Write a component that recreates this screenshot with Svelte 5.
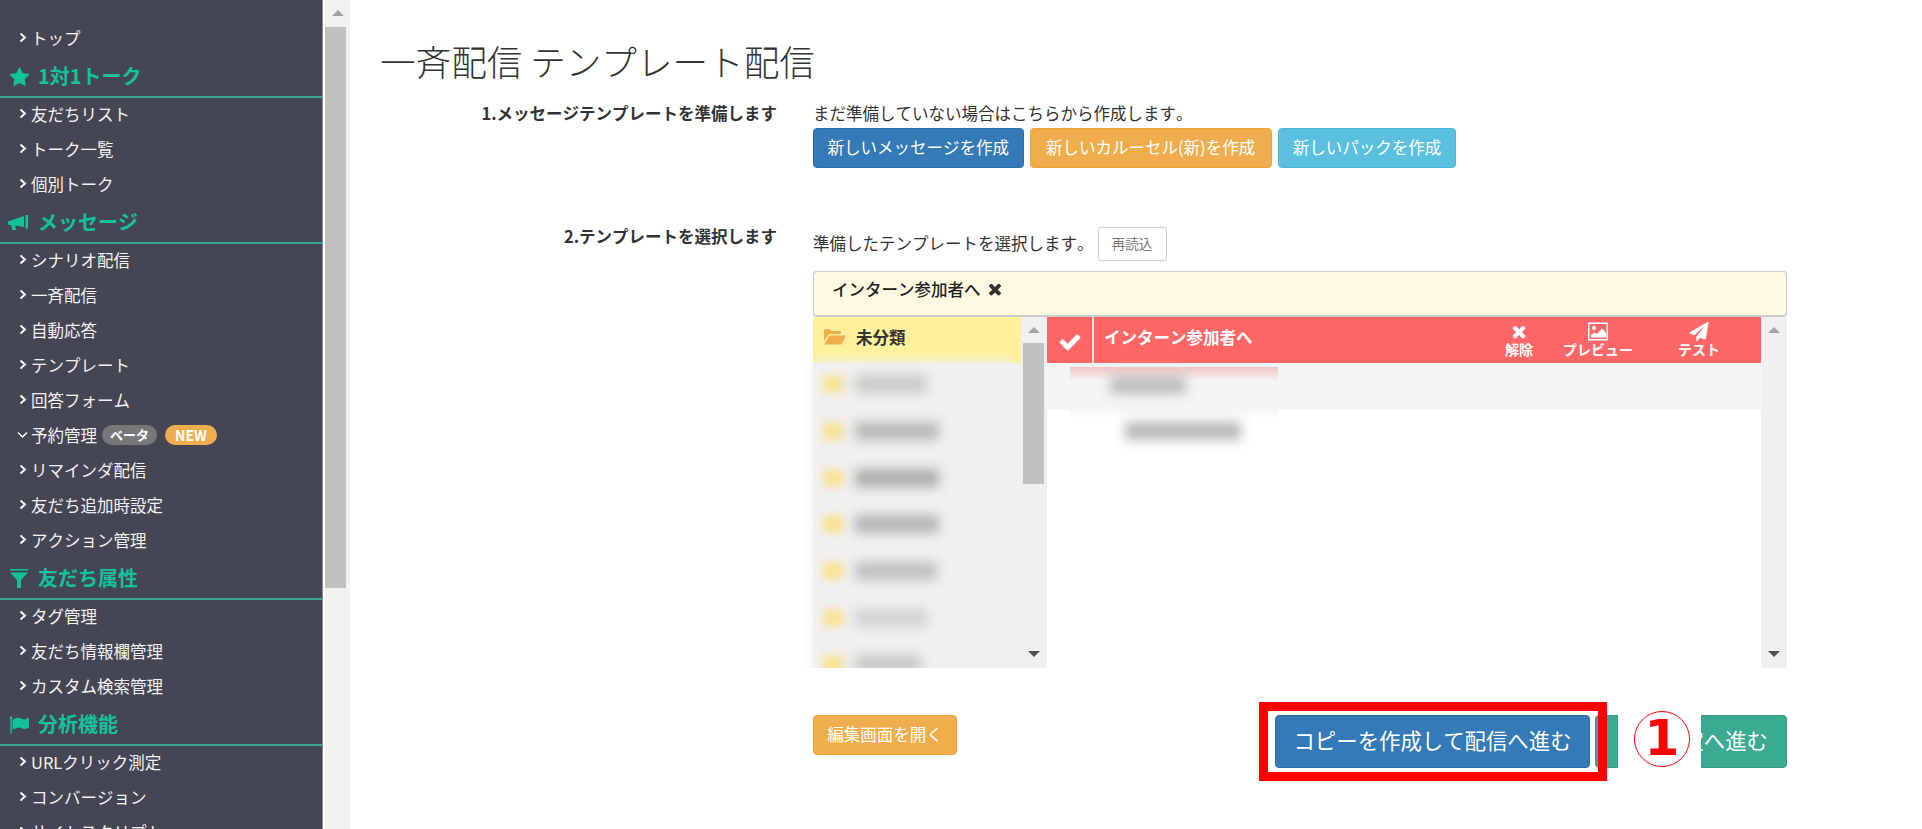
<script>
	const checkPath = 'M1671 566q0 40-28 68l-724 724-136 136q-28 28-68 28t-68-28l-136-136-362-362q-28-28-28-68t28-68l136-136q28-28 68-28t68 28l294 295 656-657q28-28 68-28t68 28l136 136q28 28 28 68z';
	const timesPath = 'M1490 1322q0 40-28 68l-136 136q-28 28-68 28t-68-28l-294-294-294 294q-28 28-68 28t-68-28l-136-136q-28-28-28-68t28-68l294-294-294-294q-28-28-28-68t28-68l136-136q28-28 68-28t68 28l294 294 294-294q28-28 68-28t68 28l136 136q28 28 28 68t-28 68l-294 294 294 294q28 28 28 68z';
	const starPath = 'M1728 647q0 22-26 48l-363 354 86 500q1 7 1 20 0 21-10.5 35.5t-30.5 14.5q-19 0-40-12l-449-236-449 236q-22 12-40 12-21 0-31.5-14.5t-10.5-35.5q0-6 2-20l86-500-364-354q-25-27-25-48 0-37 56-46l502-73 225-455q19-41 49-41t49 41l225 455 502 73q56 9 56 46z';
	const planePath = 'M1764 11q33 24 27 64l-256 1536q-5 29-32 45-14 8-31 8-11 0-24-5l-453-185-242 295q-18 23-49 23-13 0-22-4-19-7-30.5-23.5t-11.5-36.5v-349l864-1059-1069 925-395-162q-37-14-40-55-2-40 32-59l1664-960q15-9 32-9 20 0 36 11z';
	const flagPath = 'M320 256q0 72-64 110v1266q0 13-9.5 22.5t-22.5 9.5h-64q-13 0-22.5-9.5t-9.5-22.5v-1266q-64-38-64-110 0-53 37.5-90.5t90.5-37.5 90.5 37.5 37.5 90.5zm1472 64v763q0 25-12.5 38.5t-39.5 27.5q-215 116-369 116-61 0-123.5-22t-108.5-48-115.5-48-142.5-22q-192 0-464 146-17 9-33 9-26 0-45-19t-19-45v-742q0-32 31-55 21-14 79-43 236-120 421-120 107 0 200 29t219 88q38 19 88 19 54 0 117.5-21t110-47 88-47 54.5-21q26 0 45 19t19 45z';

	const menu = [
		{ items: ['トップ'] },
		{ head: '1対1トーク', icon: 'star', items: ['友だちリスト', 'トーク一覧', '個別トーク'] },
		{
			head: 'メッセージ',
			icon: 'horn',
			items: ['シナリオ配信', '一斉配信', '自動応答', 'テンプレート', '回答フォーム', '予約管理', 'リマインダ配信', '友だち追加時設定', 'アクション管理']
		},
		{ head: '友だち属性', icon: 'filter', items: ['タグ管理', '友だち情報欄管理', 'カスタム検索管理'] },
		{ head: '分析機能', icon: 'flag', items: ['URLクリック測定', 'コンバージョン', 'サイトスクリプト'] }
	];

	// blurred out in the original, so only the rough width of each name is kept
	const hiddenFolders = [
		{ width: 72, tone: 0.5 },
		{ width: 84, tone: 0.75 },
		{ width: 84, tone: 0.9 },
		{ width: 84, tone: 0.8 },
		{ width: 82, tone: 0.65 },
		{ width: 72, tone: 0.4 },
		{ width: 66, tone: 0.55 }
	];
</script>

<div class="page">
	<aside class="sidebar">
		{#each menu as group}
			{#if group.head}
				<div class="menu-head">
					<span class="head-icon">
						{#if group.icon === 'star'}
							<svg width="21" height="21" viewBox="0 0 1792 1792"><path d={starPath} /></svg>
						{:else if group.icon === 'horn'}
							<svg width="24" height="18" viewBox="0 0 24 18"><path d="M1 7.500 17 2v11L8 11.500 9 16H5.500L4 11H2.500L1 10.500zM18.500 1H21v13.500h-2.500z" /></svg>
						{:else if group.icon === 'filter'}
							<svg width="20" height="20" viewBox="0 0 20 20"><path d="M1 0h18v1.500H1zM1 3.500h18l-7 7.500v8H8v-8z" /></svg>
						{:else}
							<svg width="20" height="20" viewBox="0 0 1792 1792"><path d={flagPath} /></svg>
						{/if}
					</span>
					<span class="head-text">{group.head}</span>
				</div>
			{/if}
			{#each group.items as item}
				<div class="menu-item">
					{#if item === '予約管理'}
						<svg class="chev open" width="11" height="8" viewBox="0 0 11 8"><path d="M1 1.500l4.500 4.500L10 1.500" /></svg>
						<span>{item}</span>
						<span class="pill grey">ベータ</span>
						<span class="pill orange">NEW</span>
					{:else}
						<svg class="chev" width="8" height="11" viewBox="0 0 8 11"><path d="M1.500 1.500L6 5.500l-4.500 4" /></svg>
						<span>{item}</span>
					{/if}
				</div>
			{/each}
		{/each}
	</aside>

	<div class="page-scroll">
		<span class="arrow up"></span>
		<span class="page-thumb"></span>
	</div>

	<main class="content">
		<h1>一斉配信 テンプレート配信</h1>

		<section class="row first">
			<div class="label">1.メッセージテンプレートを準備します</div>
			<div class="field">
				<p class="hint">まだ準備していない場合はこちらから作成します。</p>
				<div class="btn-line">
					<button class="btn blue">新しいメッセージを作成</button>
					<button class="btn orange">新しいカルーセル(新)を作成</button>
					<button class="btn cyan">新しいパックを作成</button>
				</div>
			</div>
		</section>

		<section class="row second">
			<div class="label">2.テンプレートを選択します</div>
			<div class="field">
				<div class="reload-line">
					<span class="hint">準備したテンプレートを選択します。</span>
					<button class="reload">再読込</button>
				</div>

				<div class="selected">
					<span>インターン参加者へ</span>
					<svg width="18" height="18" viewBox="0 0 1792 1792"><path d={timesPath} /></svg>
				</div>

				<div class="picker">
					<div class="folders">
						<div class="folder active">
							<svg width="22" height="17" viewBox="0 0 22 17"><path d="M0 2.500C0 1.500.7 1 1.500 1h4.500l1.500 2h8c.8 0 1.500.6 1.500 1.500V6H5L0 13z" /><path d="M5.500 7.500H22l-4.500 9H0z" /></svg>
							<span>未分類</span>
						</div>
						<div class="blur-patch"></div>
						<div class="hidden-rows">
							{#each hiddenFolders as folder}
								<div class="folder-row">
									<span class="smudge-icon"></span>
									<span class="smudge" style="width: {folder.width}px; opacity: {folder.tone}"></span>
								</div>
							{/each}
						</div>
					</div>

					<div class="list-scroll">
						<span class="arrow up"></span>
						<span class="list-thumb"></span>
						<span class="arrow down"></span>
					</div>

					<div class="templates">
						<div class="table-head">
							<div class="check-cell">
								<svg width="24" height="24" viewBox="0 0 1792 1792"><path d={checkPath} /></svg>
							</div>
							<div class="name-cell"><span>インターン参加者へ</span></div>
							<div class="action a-remove">
								<svg width="22" height="20" viewBox="0 0 1792 1792"><path d={timesPath} /></svg>
								<span>解除</span>
							</div>
							<div class="action a-preview">
								<svg width="20" height="18" viewBox="0 0 20 18"><path fill-rule="evenodd" d="M0 0h20v18H0zM1.500 1.500v15h17v-15zM6 3.500a2 2 0 1 1 0 4 2 2 0 0 1 0-4zM3 15v-2.500l3.500-2.500 2.500 1.500L14 6l4 4.500V15z" /></svg>
								<span>プレビュー</span>
							</div>
							<div class="action a-test">
								<svg width="22" height="20" viewBox="0 0 1792 1792"><path d={planePath} /></svg>
								<span>テスト</span>
							</div>
						</div>
						<div class="table-row shaded"></div>
						<div class="redacted"></div>
						<span class="smudge line-one"></span>
						<span class="smudge line-two"></span>
					</div>

					<div class="list-scroll right">
						<span class="arrow up"></span>
						<span class="arrow down"></span>
					</div>
				</div>
			</div>
		</section>

		<section class="row actions">
			<div></div>
			<div class="action-line">
				<button class="btn orange open-editor">編集画面を開く</button>
				<div class="go-buttons">
					<button class="btn blue large">コピーを作成して配信へ進む</button>
					<button class="btn green large">配信設定へ進む</button>
					<span class="red-box"></span>
					<span class="step-cover">
						<span class="step-number">1</span>
					</span>
				</div>
			</div>
		</section>
	</main>
</div>

<style>
	:global(body) {
		margin: 0;
		background: #fff;
		font-family: "Noto Sans CJK JP", "Liberation Sans", sans-serif;
		font-kerning: none;
		color: #333;
	}

	.page {
		display: flex;
		height: 829px;
		overflow: hidden;
	}

	/* sidebar */
	.sidebar {
		width: 322px;
		flex: none;
		padding-top: 22px;
		background: #454654;
		border-right: 1px solid #8b8c96;
		overflow: hidden;
	}

	.menu-item {
		display: flex;
		align-items: center;
		box-sizing: border-box;
		height: 35px;
		padding: 0 0 4px 19px;
		font-size: 16.500px;
		color: #f2f2f2;
		white-space: nowrap;
	}

	.chev {
		flex: none;
		margin-right: 4px;
		fill: none;
		stroke: #fff;
		stroke-width: 2;
	}

	.chev.open {
		margin-left: -2px;
		margin-right: 3px;
		stroke-width: 1.500;
	}

	.pill {
		height: 20px;
		line-height: 20px;
		border-radius: 10px;
		font-size: 13px;
		font-weight: 700;
		color: #fff;
	}

	.pill.grey {
		background: #777;
		padding: 0 8px;
		margin-left: 5px;
	}

	.pill.orange {
		background: #f0ad4e;
		padding: 0 10px;
		font-size: 14px;
		margin-left: 8px;
	}

	.menu-head {
		display: flex;
		align-items: center;
		height: 38px;
		padding-top: 1px;
		border-bottom: 2px solid #38a88e;
		font-size: 20px;
		font-weight: 700;
		color: #12c29d;
		white-space: nowrap;
	}

	.head-text {
		position: relative;
		top: -2px;
	}

	.head-icon {
		display: flex;
		justify-content: center;
		width: 38px;
		flex: none;
	}

	.head-icon svg {
		fill: #12c29d;
	}

	/* page scrollbar */
	.page-scroll {
		position: relative;
		width: 27px;
		flex: none;
		background: #f1f1f1;
		border-left: 2px solid #fff;
		box-sizing: border-box;
	}

	.page-thumb {
		position: absolute;
		left: 0;
		right: 4px;
		top: 27px;
		height: 561px;
		background: #c1c1c1;
	}

	.arrow {
		position: absolute;
		left: 50%;
		margin-left: -6px;
		width: 0;
		height: 0;
		border-left: 6px solid transparent;
		border-right: 6px solid transparent;
	}

	.arrow.up {
		top: 10px;
		border-bottom: 6px solid #a3a3a3;
	}

	.arrow.down {
		bottom: 11px;
		border-top: 6px solid #505050;
	}

	/* main column */
	.content {
		flex: 1;
		padding: 41px 135px 0 30px;
		min-width: 0;
	}

	h1 {
		margin: 0;
		font-size: 35.600px;
		line-height: 40px;
		font-weight: 300;
		color: #333;
		white-space: nowrap;
	}

	.row {
		display: grid;
		grid-template-columns: 397px 1fr;
		column-gap: 36px;
	}

	.row.first {
		margin-top: 21px;
	}

	.row.second {
		margin-top: 57px;
	}

	.row.actions {
		margin-top: 47px;
	}

	.label {
		text-align: right;
		font-size: 16.500px;
		line-height: 22px;
		font-weight: 700;
		white-space: nowrap;
	}

	.hint {
		margin: 0;
		font-size: 16.500px;
		line-height: 24px;
		white-space: nowrap;
		position: relative;
		top: -1px;
	}

	.btn-line {
		display: flex;
		gap: 6px;
		margin-top: 2px;
	}

	.btn {
		height: 40px;
		padding: 0 14px 3px;
		border: 1px solid transparent;
		border-radius: 4px;
		font: inherit;
		font-size: 16.500px;
		color: #fff;
		white-space: nowrap;
	}

	.btn-line .blue {
		padding: 0 13.500px 3px;
	}

	.btn-line .orange {
		padding: 0 15.500px 3px;
	}

	.btn.blue {
		background: #337ab7;
		border-color: #2e6da4;
	}

	.btn.orange {
		background: #f0ad4e;
		border-color: #eea236;
	}

	.btn.cyan {
		background: #5bc0de;
		border-color: #46b8da;
	}

	.btn.green {
		background: #3aaa90;
		border-color: #359a83;
	}

	.btn.large {
		height: 53px;
		font-size: 21.400px;
	}

	.reload-line {
		display: flex;
		align-items: center;
		gap: 4px;
		margin-top: 2px;
		height: 34px;
	}

	.reload {
		width: 69px;
		height: 34px;
		padding: 0 0 2px;
		border: 1px solid #ccc;
		border-radius: 3px;
		background: #fff;
		font: inherit;
		font-size: 13.500px;
		color: #777;
	}

	.selected {
		display: flex;
		align-items: center;
		gap: 5px;
		box-sizing: border-box;
		height: 46px;
		margin-top: 10px;
		padding: 0 0 9px 18px;
		background: #fff9e1;
		border: 1px solid #ccc;
		border-width: 1px 1px 2px;
		border-radius: 4px;
		font-size: 16.500px;
		font-weight: 500;
		color: #222;
	}

	.selected svg {
		fill: #333;
	}

	.picker {
		display: grid;
		grid-template-columns: 208px 26px 714px 26px;
		height: 351px;
	}

	.folders {
		position: relative;
		background: #f0f0f0;
	}

	.folder {
		display: flex;
		align-items: center;
		gap: 10px;
		height: 46px;
		padding: 0 0 7px 11px;
		box-sizing: border-box;
		font-size: 16.500px;
		font-weight: 700;
		color: #333;
	}

	.folder svg {
		fill: #f0ad4e;
	}

	.folder.active {
		background: #fff09c;
	}

	.blur-patch {
		position: absolute;
		left: -8px;
		top: 35px;
		width: 206px;
		height: 316px;
		background: linear-gradient(rgba(240, 240, 240, 0), #f0f0f0 18px);
		-webkit-mask-image: linear-gradient(to right, transparent, #000 14px);
		mask-image: linear-gradient(to right, transparent, #000 14px);
	}

	.hidden-rows {
		position: absolute;
		left: 0;
		right: 0;
		top: 44px;
		bottom: 0;
		overflow: hidden;
	}

	.folder-row {
		display: flex;
		align-items: center;
		height: 46.700px;
		padding-left: 10px;
		gap: 12px;
	}

	.smudge-icon {
		width: 20px;
		height: 16px;
		background: #fbe08c;
		filter: blur(5px);
	}

	.smudge {
		height: 18px;
		background: #a6a6a6;
		filter: blur(6px);
	}

	.list-scroll {
		position: relative;
		background: #f0f0f0;
	}

	.list-thumb {
		position: absolute;
		left: 2px;
		right: 3px;
		top: 26px;
		height: 141px;
		background: #c1c1c1;
	}

	.templates {
		position: relative;
		background: #fff;
	}

	.table-head {
		display: grid;
		grid-template-columns: 47px 1fr;
		height: 46px;
		background: #ff6666;
		color: #fff;
		position: relative;
	}

	.check-cell {
		display: flex;
		align-items: center;
		justify-content: center;
		border-right: 2px solid #f4e4e4;
		margin-bottom: -4px;
		position: relative;
		z-index: 1;
	}

	.check-cell svg {
		fill: #fff;
	}

	.name-cell {
		display: flex;
		align-items: center;
		padding: 0 0 6px 10px;
		font-size: 16.500px;
		font-weight: 700;
	}

	.action {
		position: absolute;
		top: 5px;
		display: flex;
		flex-direction: column;
		align-items: center;
		transform: translateX(-50%);
		font-size: 14px;
		font-weight: 700;
		line-height: 16px;
		white-space: nowrap;
	}

	.action svg {
		fill: #fff;
		height: 19px;
	}

	.a-remove {
		left: 472px;
	}

	.a-preview {
		left: 551px;
	}

	.a-test {
		left: 652px;
	}

	.table-row.shaded {
		height: 47px;
		background: #f5f5f5;
	}

	.redacted {
		position: absolute;
		left: 23px;
		top: 50px;
		width: 208px;
		height: 52px;
		background: linear-gradient(#f2c5c5, #f5f5f5 14px, #f5f5f5 42px, #fff);
	}

	.smudge.line-one {
		position: absolute;
		left: 63px;
		top: 59px;
		width: 76px;
		opacity: 0.7;
	}

	.smudge.line-two {
		position: absolute;
		left: 78px;
		top: 105px;
		width: 116px;
		opacity: 0.8;
	}

	.action-line {
		display: flex;
		justify-content: space-between;
		align-items: flex-start;
	}

	.open-editor {
		width: 144px;
		padding: 0 0 3px;
	}

	.go-buttons {
		position: relative;
		display: flex;
		gap: 5px;
	}

	.go-buttons .blue {
		width: 315px;
		padding: 0 0 5px;
	}

	.go-buttons .green {
		width: 192px;
		padding: 0 18px 5px 0;
		text-align: right;
	}

	.red-box {
		position: absolute;
		left: -16px;
		top: -13px;
		width: 348px;
		height: 79px;
		box-sizing: border-box;
		border: 9px solid #ff0000;
	}

	.step-cover {
		position: absolute;
		left: 343px;
		top: 0;
		width: 83px;
		height: 53px;
		background: #fff;
	}

	.step-number {
		position: absolute;
		left: 16px;
		top: -4px;
		width: 56px;
		height: 56px;
		box-sizing: border-box;
		border: 1.500px solid #ff0000;
		border-radius: 50%;
		color: #ff0000;
		font-family: "DejaVu Sans", sans-serif;
		font-size: 50px;
		font-weight: 700;
		line-height: 52px;
		text-align: center;
	}
</style>
